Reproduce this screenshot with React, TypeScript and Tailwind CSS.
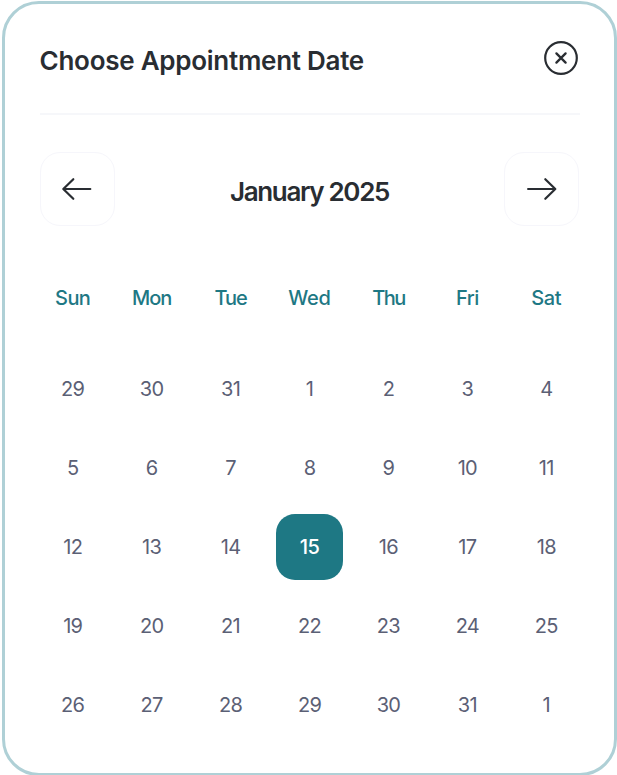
const weekdays = [
  { name: "Sun", fit: "tracking-[-0.6px]" },
  { name: "Mon", fit: "tracking-[-1px]" },
  { name: "Tue", fit: "tracking-[-1px]" },
  { name: "Wed", fit: "tracking-[-0.3px]" },
  { name: "Thu", fit: "tracking-[-1.6px]" },
  { name: "Fri", fit: "tracking-[-0.6px]" },
  { name: "Sat", fit: "tracking-[-0.4px]" },
];

const days = [
  29, 30, 31, 1, 2, 3, 4,
  5, 6, 7, 8, 9, 10, 11,
  12, 13, 14, 15, 16, 17, 18,
  19, 20, 21, 22, 23, 24, 25,
  26, 27, 28, 29, 30, 31, 1,
];

function Arrow({ direction }: { direction: "left" | "right" }) {
  return (
    <svg
      width="32"
      height="24"
      viewBox="0 0 32 24"
      fill="none"
      stroke="#292d32"
      strokeWidth="2.2"
      strokeLinecap="round"
      strokeLinejoin="round"
      aria-hidden="true"
    >
      {direction === "left" ? (
        <path d="M12.3 2.2 2.3 12l10 9.8M29.3 12H2.6" />
      ) : (
        <path d="M19.3 2.2 29.3 12l-10 9.8M2.1 12H29" />
      )}
    </svg>
  );
}

function NavButton({ direction }: { direction: "left" | "right" }) {
  return (
    <button
      aria-label={direction === "left" ? "Previous month" : "Next month"}
      className="flex h-[74px] w-[75px] items-center justify-center rounded-[20px] border-[1.5px] border-[#f6f6fb]"
    >
      <Arrow direction={direction} />
    </button>
  );
}

export default function App() {
  return (
    <div className="h-[775px] w-[617px] overflow-hidden bg-white pl-[2px] pt-px font-['Inter',sans-serif]">
      <main className="h-[775px] w-[615px] rounded-[37px] border-[3px] border-[#afd0d6] pl-[34.5px] pr-[34.5px]">
        <header className="flex h-[111px] items-start justify-between border-b-2 border-[#f6f7fa]">
          <h1 className="mt-[39px] whitespace-nowrap text-[26px] font-semibold leading-[36px] tracking-[-0.26px] text-[#292d32]">
            Choose Appointment Date
          </h1>
          <button aria-label="Close" className="mt-[35.5px] mr-[0.5px]">
            <svg width="36" height="36" viewBox="0 0 36 36" fill="none" stroke="#292d32" strokeWidth="2.2" strokeLinecap="round" aria-hidden="true">
              <circle cx="18" cy="18" r="15.8" />
              <path d="m13.4 13.4 9.2 9.2M22.6 13.4l-9.2 9.2" strokeWidth="2.3" />
            </svg>
          </button>
        </header>

        <div className="mt-[37px] flex items-center justify-between">
          <NavButton direction="left" />
          <h2 className="mt-[6px] whitespace-nowrap text-[26px] font-semibold leading-[36px] tracking-[-1.35px] text-[#292d32]">
            January 2025
          </h2>
          <NavButton direction="right" />
        </div>

        <div className="mt-[57px] grid h-[30px] grid-cols-7 gap-x-[12.5px] text-center text-[20px] font-medium leading-[30px] text-[#1e7884]">
          {weekdays.map(({ name, fit }) => (
            <span key={name} className={fit}>{name}</span>
          ))}
        </div>

        <div className="mt-[43px] grid auto-rows-[66px] grid-cols-7 gap-x-[12.5px] gap-y-[13px] text-[20px] tracking-[-0.7px]">
          {days.map((day, index) => (
            <button
              key={index}
              className={
                index === 17
                  ? "rounded-[19px] bg-[#1e7884] font-medium text-white"
                  : "rounded-[19px] text-[#5b6075]"
              }
            >
              {day}
            </button>
          ))}
        </div>
      </main>
    </div>
  );
}
